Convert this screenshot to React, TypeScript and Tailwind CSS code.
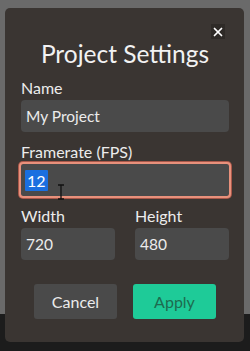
import { X } from 'lucide-react'

const Field = ({ label, value, className = '' }: { label: string; value: string; className?: string }) => (
  <div className={`flex flex-col ${className}`}>
    <label className="text-[16px] leading-[18px] text-[#ececec]">{label}</label>
    <div className="mt-[3px] flex h-8 items-center rounded-[4px] bg-[#4a4a4a] pl-[5px] text-[15.5px] text-[#ececec]">
      {value}
    </div>
  </div>
)

const App = () => {
  return (
    <div
      className="relative h-[351px] w-[250px] overflow-hidden"
      style={{ fontFamily: 'Lato, "Noto Sans", sans-serif' }}
    >
      <div className="flex h-full flex-col">
        <div className="h-[314px] bg-[#6a6a6a]" />
        <div className="flex-1 bg-[#1c1c1c]" />
      </div>

      <div className="absolute left-[5px] top-[8px] flex w-[239px] flex-col rounded-[5px] bg-[#3a3532] pb-[23px] pl-4 pr-[15px] pt-[31px]">
        <button
          type="button"
          className="absolute right-[19px] top-[16px] flex h-[15px] w-[14px] items-center justify-center bg-[#2e2a27] text-white"
        >
          <X size={14} strokeWidth={3} />
        </button>

        <h1 className="text-center text-[24.5px] leading-[1.2] text-[#f2f2f2]">Project Settings</h1>

        <Field label="Name" value="My Project" className="mt-[11px]" />

        <div className="mt-[11px] flex flex-col">
          <label className="text-[16px] leading-[18px] text-[#ececec]">Framerate (FPS)</label>
          <div className="relative mt-[3px] flex h-8 items-center rounded-[2px] bg-[#4a4a4a] pl-[4px] text-[16px] text-white outline outline-2 outline-[#e8917c] ring-[3px] ring-[#a9584a]">
            <span className="rounded-[1px] bg-[#1a6fe0] px-[2px] leading-[21px]">12</span>
            <svg className="absolute left-[36px] top-[20px]" width="8" height="16" viewBox="0 0 8 16">
              <path d="M1 1h6M4 1v14M1 15h6" stroke="#111" strokeWidth="1.3" fill="none" />
            </svg>
          </div>
        </div>

        <div className="mt-[11px] flex gap-5">
          <Field label="Width" value="720" className="flex-1" />
          <Field label="Height" value="480" className="flex-1" />
        </div>

        <div className="mt-6 flex justify-center gap-4">
          <button type="button" className="h-[35px] w-[83px] rounded-[3px] bg-[#4a4a4a] text-[16px] text-[#ececec]">
            Cancel
          </button>
          <button type="button" className="h-[35px] w-[83px] rounded-[3px] bg-[#1ecb98] text-[16px] text-[#1d6b4f]">
            Apply
          </button>
        </div>
      </div>
    </div>
  )
}

export default App
